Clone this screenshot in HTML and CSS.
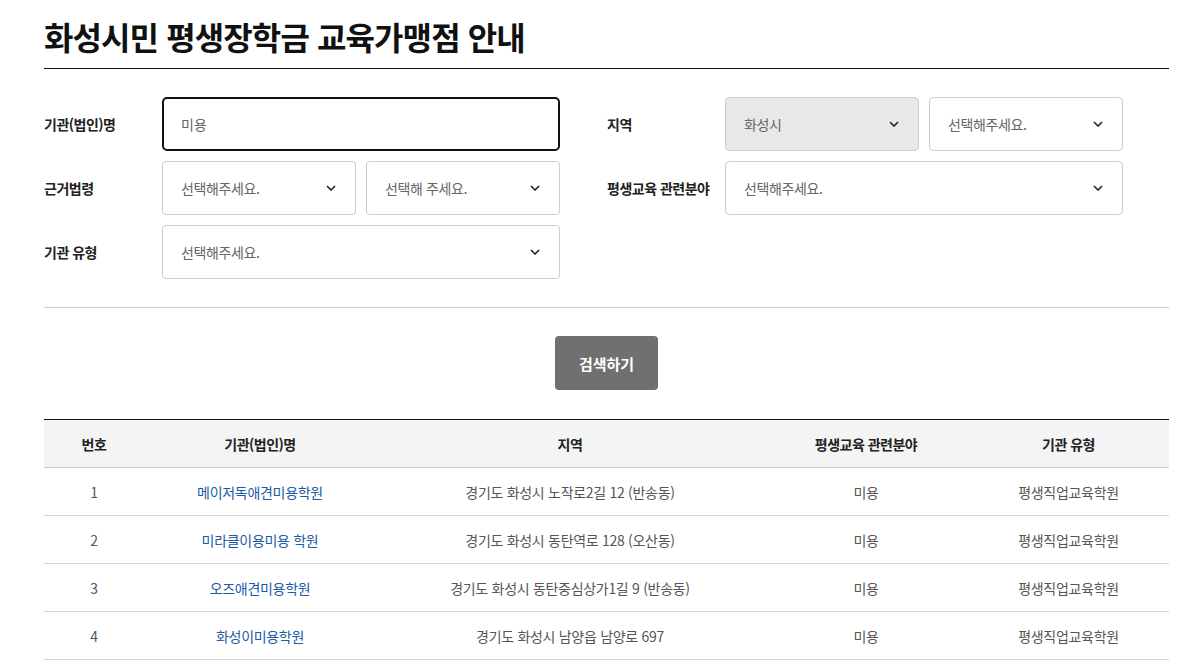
FILE: index.html
```html
<!DOCTYPE html>
<html lang="ko">
<head>
<meta charset="utf-8"/>
<meta name="viewport" content="width=device-width, initial-scale=1.0"/>
<title>화성시민 평생장학금 교육가맹점 안내</title>
<link rel="stylesheet" href="styles.css">
</head>
<body>
  <div class="page">
    <h1 class="page-title">화성시민 평생장학금 교육가맹점 안내</h1>

    <div class="search-form">
      <div class="field">
        <label class="field-label">기관(법인)명</label>
        <div class="field-control">
          <input class="text-input" type="text" value="미용" autofocus>
        </div>
      </div>
      <div class="field">
        <label class="field-label">지역</label>
        <div class="field-control">
          <div class="select disabled"><span>화성시</span><svg viewBox="0 0 10 6"><path d="M1 1l4 4 4-4"/></svg></div>
          <div class="select"><span>선택해주세요.</span><svg viewBox="0 0 10 6"><path d="M1 1l4 4 4-4"/></svg></div>
        </div>
      </div>
      <div class="field">
        <label class="field-label">근거법령</label>
        <div class="field-control">
          <div class="select"><span>선택해주세요.</span><svg viewBox="0 0 10 6"><path d="M1 1l4 4 4-4"/></svg></div>
          <div class="select"><span>선택해 주세요.</span><svg viewBox="0 0 10 6"><path d="M1 1l4 4 4-4"/></svg></div>
        </div>
      </div>
      <div class="field">
        <label class="field-label">평생교육 관련분야</label>
        <div class="field-control">
          <div class="select"><span>선택해주세요.</span><svg viewBox="0 0 10 6"><path d="M1 1l4 4 4-4"/></svg></div>
        </div>
      </div>
      <div class="field">
        <label class="field-label">기관 유형</label>
        <div class="field-control">
          <div class="select"><span>선택해주세요.</span><svg viewBox="0 0 10 6"><path d="M1 1l4 4 4-4"/></svg></div>
        </div>
      </div>
    </div>

    <div class="search-actions">
      <button class="search-button" type="button">검색하기</button>
    </div>

    <table class="result-table">
      <colgroup>
        <col class="col-no">
        <col class="col-name">
        <col class="col-addr">
        <col class="col-field">
        <col class="col-type">
      </colgroup>
      <thead>
        <tr>
          <th>번호</th>
          <th>기관(법인)명</th>
          <th>지역</th>
          <th>평생교육 관련분야</th>
          <th>기관 유형</th>
        </tr>
      </thead>
      <tbody>
        <tr>
          <td>1</td>
          <td><a href="#">메이저독애견미용학원</a></td>
          <td>경기도 화성시 노작로2길 12 (반송동)</td>
          <td>미용</td>
          <td>평생직업교육학원</td>
        </tr>
        <tr>
          <td>2</td>
          <td><a href="#">미라클이용미용 학원</a></td>
          <td>경기도 화성시 동탄역로 128 (오산동)</td>
          <td>미용</td>
          <td>평생직업교육학원</td>
        </tr>
        <tr>
          <td>3</td>
          <td><a href="#">오즈애견미용학원</a></td>
          <td>경기도 화성시 동탄중심상가1길 9 (반송동)</td>
          <td>미용</td>
          <td>평생직업교육학원</td>
        </tr>
        <tr>
          <td>4</td>
          <td><a href="#">화성이미용학원</a></td>
          <td>경기도 화성시 남양읍 남양로 697</td>
          <td>미용</td>
          <td>평생직업교육학원</td>
        </tr>
      </tbody>
    </table>
  </div>
</body>
</html>
```

FILE: styles.css
```css
body {
  margin: 0;
  font-family: "Noto Sans CJK KR", "Noto Sans", sans-serif;
  color: #222;
  background: #fff;
}
.page {
  width: 1125px;
  margin-left: 44px;
}
.page-title {
  margin: 0;
  padding: 14px 0 10px;
  font-size: 32px;
  line-height: 44px;
  font-weight: 700;
  letter-spacing: -0.9px;
  color: #111;
  border-bottom: 1px solid #111;
}
.search-form {
  display: grid;
  grid-template-columns: 516px 516px;
  column-gap: 47px;
  row-gap: 10px;
  margin-top: 28px;
  padding-bottom: 28px;
  border-bottom: 1px solid #ccc;
}
.field {
  display: flex;
  align-items: center;
  height: 54px;
}
.field-label {
  width: 118px;
  flex-shrink: 0;
  font-size: 14px;
  font-weight: 700;
  letter-spacing: -0.5px;
  color: #222;
}
.field-control {
  flex: 1;
  display: flex;
  gap: 10px;
  height: 100%;
}
.text-input {
  flex: 1;
  box-sizing: border-box;
  height: 100%;
  padding: 0 17px;
  border: 2px solid #111;
  border-radius: 5px;
  font-family: inherit;
  font-size: 14px;
  color: #666;
  outline: none;
}
.select {
  flex: 1;
  box-sizing: border-box;
  display: flex;
  align-items: center;
  justify-content: space-between;
  padding: 0 19px 0 18px;
  border: 1px solid #ccc;
  border-radius: 4px;
  background: #fff;
  font-size: 14px;
  letter-spacing: -0.4px;
  color: #666;
}
.select.disabled {
  background: #e8e8e8;
}
.select svg {
  width: 10px;
  height: 6px;
  fill: none;
  stroke: #222;
  stroke-width: 1.6;
}
.search-actions {
  display: flex;
  justify-content: center;
  padding: 28px 0 29px;
}
.search-button {
  width: 103px;
  height: 54px;
  border: none;
  border-radius: 4px;
  background: #707070;
  color: #fff;
  font-family: inherit;
  font-size: 15px;
  font-weight: 700;
}
.result-table {
  width: 100%;
  border-collapse: collapse;
  table-layout: fixed;
  border-top: 1px solid #111;
  font-size: 14px;
}
.col-no { width: 100px; }
.col-name { width: 232px; }
.col-addr { width: 388px; }
.col-field { width: 204px; }
.col-type { width: 201px; }
.result-table th {
  height: 47px;
  padding: 0;
  background: #f4f4f4;
  font-weight: 700;
  color: #222;
  letter-spacing: -0.5px;
  border-bottom: 1px solid #ccc;
}
.result-table td {
  height: 47px;
  padding: 0;
  text-align: center;
  color: #555;
  border-bottom: 1px solid #d5d5d5;
  letter-spacing: -0.3px;
}
.result-table a {
  color: #1c5aa3;
  text-decoration: none;
}
```
